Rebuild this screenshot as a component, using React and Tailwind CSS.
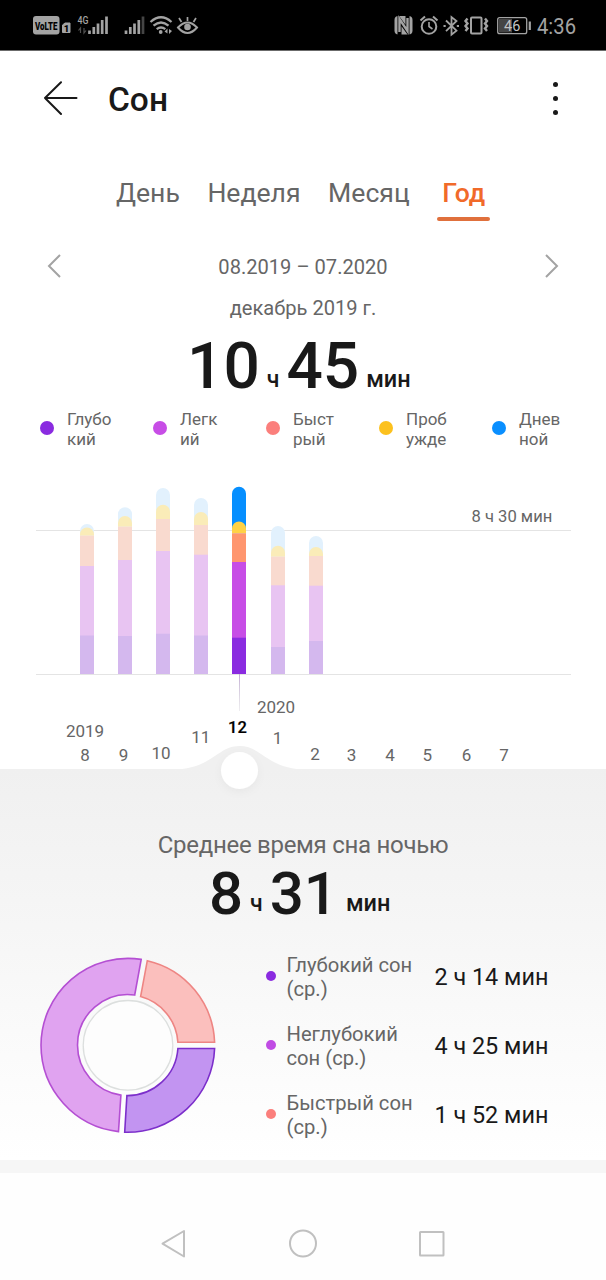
import React from "react";

const tabs = ["День", "Неделя", "Месяц"];

const legend = [
  { a: "Глубо", b: "кий", dot: "bg-[#8a2be0]" },
  { a: "Легк", b: "ий", dot: "bg-[#c74de6]" },
  { a: "Быст", b: "рый", dot: "bg-[#fb7f7c]" },
  { a: "Проб", b: "ужде", dot: "bg-[#fcc11e]" },
  { a: "Днев", b: "ной", dot: "bg-[#0a8fff]" },
];

// x, then the top edge of each layer: day, awake, REM, light, deep
const bars = [
  [80, 524, 527.5, 535.7, 566, 635.5],
  [118, 507.3, 516, 526.7, 560, 636],
  [156, 488, 504.7, 519, 551, 633.7],
  [194, 498, 512, 525, 554.7, 635.5],
  [232, 486.7, 521.5, 533.3, 562, 637.7],
  [271, 526, 545.7, 556.7, 585.3, 647],
  [309, 536, 547, 556, 585.7, 641],
];
const faded = ["#e2f1fd", "#faecb8", "#f9dacf", "#e8c4f2", "#d4b8ee"];
const strong = ["#068fff", "#ffd246", "#ff966e", "#c74de6", "#8a2be0"];

const axis = [
  ["2019", 85, 736.7], ["8", 85, 761], ["9", 123.5, 761], ["10", 161, 759],
  ["11", 200.8, 743], ["2020", 276, 712.5], ["1", 277.5, 744], ["2", 315, 760],
  ["3", 351.5, 761], ["4", 390, 761], ["5", 427.3, 761], ["6", 466.5, 761], ["7", 504, 761],
];

const phases = [
  { a: "Глубокий сон", b: "(ср.)", v: "2 ч 14 мин", dot: "bg-[#8a2be0]" },
  { a: "Неглубокий", b: "сон (ср.)", v: "4 ч 25 мин", dot: "bg-[#c04ce4]" },
  { a: "Быстрый сон", b: "(ср.)", v: "1 ч 52 мин", dot: "bg-[#fb7f7c]" },
];

function Bar({ bar, active }) {
  const [x, ...tops] = bar;
  const colors = active ? strong : faded;
  return tops.map((y, i) =>
    i < 2 ? (
      <path key={i} fill={colors[i]}
        d={`M${x} ${tops[2]}V${y + 7}a7 7 0 0 1 14 0V${tops[2]}z`} />
    ) : (
      <rect key={i} x={x} y={y} width="14" height={674 - y} fill={colors[i]} />
    )
  );
}

function StatusLeft() {
  return (
    <svg width="303" height="50" viewBox="0 0 303 50" fill="none">
      <rect x="33" y="16" width="26.500" height="18.500" rx="3" fill="#a3a3a3" />
      <text x="35" y="29.500" fontSize="11" fontWeight="900" fill="#000" textLength="22.500" lengthAdjust="spacingAndGlyphs">VoLTE</text>
      <path d="M65 23h5v9.500h-7.500V25z" fill="#a3a3a3" stroke="#a3a3a3" strokeLinejoin="round" />
      <text x="63.800" y="31.500" fontSize="9.500" fontWeight="900" fill="#000">1</text>
      <text x="77.500" y="24" fontSize="11" fontWeight="500" fill="#a3a3a3" textLength="11" lengthAdjust="spacingAndGlyphs">4G</text>
      <g stroke="#505050" strokeWidth="1.200">
        <path d="M80.500 33v-5l-2 2.500M84 28v5l2-2.500" />
      </g>
      <g stroke="#a3a3a3" strokeWidth="2.700">
        <path d="M89.500 30.500v3.500M93.800 27v7M98 23.500V34M102.200 20v14M106.500 16.500V34" />
        <path d="M126 30.500v3.500M130.300 27v7M134.500 23.500V34M138.800 20v14" />
        <path d="M143 16.500V34" stroke="#454545" />
      </g>
      <g stroke="#a3a3a3" strokeWidth="2.300">
        <path d="M150.500 22q10.500-9.500 21 0M153.500 25.700q7.500-6.500 15 0M156.700 29.200q4.300-3.500 8.600 0" />
      </g>
      <circle cx="160.700" cy="32" r="1.900" fill="#a3a3a3" />
      <path d="M164.500 31.500l3-3v5M169 29v5l3-3z" fill="#a3a3a3" />
      <path d="M178 27.500q9.500-10 19 0q-9.500 11-19 0z" stroke="#a3a3a3" strokeWidth="2" />
      <circle cx="187.500" cy="27" r="3.300" fill="#a3a3a3" />
      <path d="M187.500 21v-4M181.500 22l-2.500-4M193.500 22l2.500-4" stroke="#a3a3a3" strokeWidth="1.700" />
    </svg>
  );
}

function StatusRight() {
  return (
    <svg width="303" height="50" viewBox="303 0 303 50" fill="none" stroke="#a3a3a3">
      <rect x="394.500" y="16" width="18" height="18.500" rx="4" fill="#a3a3a3" stroke="none" />
      <path d="M399.500 35V20l8 11V15.500" stroke="#000" strokeWidth="4" />
      <path d="M399.500 32V19l8 12V18" strokeWidth="2.400" />
      <circle cx="429" cy="26.500" r="7.300" strokeWidth="2" />
      <path d="M429 22v4.500l3.500 2.500" strokeWidth="1.600" />
      <path d="M420.500 20.500l4.500-4M437.500 20.500l-4.500-4" strokeWidth="2" />
      <path d="M446 20.500l10.500 10.200-5 4V17l5 4L446 31.200" strokeWidth="1.800" />
      <path d="M443.500 26h2.200M456.800 26h2.200" strokeWidth="2" />
      <rect x="471" y="17.500" width="10.500" height="16" rx="1" strokeWidth="2" />
      <path d="M467.500 18.500l-2 2.500 2 2.500-2 2.500 2 2.500-2 2.500M485 18.500l2 2.500-2 2.500 2 2.500-2 2.500 2 2.500" strokeWidth="2.400" />
      <rect x="497.700" y="17.700" width="29" height="16" rx="2" strokeWidth="1.300" />
      <rect x="499" y="19" width="13" height="13.500" fill="#454545" stroke="none" />
      <path d="M529.800 21.500v8.500" strokeWidth="2.200" />
      <g fill="#a3a3a3" stroke="none">
        <text x="504" y="31" fontSize="14.500" fill="#c4c4c4" textLength="16.300" lengthAdjust="spacingAndGlyphs">46</text>
        <text x="537" y="34" fontSize="22" textLength="39" lengthAdjust="spacingAndGlyphs">4:36</text>
      </g>
    </svg>
  );
}

function Duration({ h, m, className, size, unit, hGap, mGap }) {
  return (
    <div className={`flex items-baseline font-medium text-[#191919] ${className}`}>
      <span className={size}>{h}</span>
      <span className={`text-[23px] ${unit} ${hGap}`}>ч</span>
      <span className={size}>{m}</span>
      <span className={`text-[23.5px] ${unit} ${mGap}`}>мин</span>
    </div>
  );
}

export default function App() {
  return (
    <div className="flex h-[1280px] w-[606px] flex-col overflow-hidden bg-white font-['Roboto',sans-serif] text-[#666]">
      <div className="flex h-[51px] shrink-0 border-b border-[#6b6b6b] bg-black">
        <StatusLeft />
        <StatusRight />
      </div>

      <header className="flex h-[96px] shrink-0 items-center pl-[43px] pr-[47px]">
        <svg width="36" height="36" viewBox="0 0 36 36" fill="none" stroke="#191919" strokeWidth="2" strokeLinecap="round" strokeLinejoin="round">
          <path d="M33.500 17H2M18 1.300L2 17l16 16" />
        </svg>
        <h1 className="ml-[29px] flex-1 pt-[2px] text-[33.5px] font-medium leading-[40px] text-[#191919]">Сон</h1>
        <div className="-mt-[2px] flex w-[8px] flex-col items-center gap-[9px]">
          <span className="size-[5px] rounded-full bg-[#191919]" />
          <span className="size-[5px] rounded-full bg-[#191919]" />
          <span className="size-[5px] rounded-full bg-[#191919]" />
        </div>
      </header>

      <nav className="flex h-[74px] shrink-0 gap-[27.5px] pl-[116px] pt-[25px] text-[26.6px] leading-[41px]">
        {tabs.map((t) => <span key={t}>{t}</span>)}
        <span className="flex w-[53px] flex-col items-center font-medium text-[#f16a2a]">
          Год
          <i className="mt-[4px] h-[4px] w-full rounded-full bg-[#e0703c]" />
        </span>
      </nav>

      <div className="mt-[20px] flex h-[52px] shrink-0 items-center justify-between px-[47px] text-[20.1px]">
        <svg className="-mt-[2px]" width="14" height="24" viewBox="0 0 14 24" fill="none" stroke="#a3a3a3" strokeWidth="2"><path d="M13 1L2 12l11 11" /></svg>
        <span>08.2019 – 07.2020</span>
        <svg className="-mt-[2px]" width="14" height="24" viewBox="0 0 14 24" fill="none" stroke="#a3a3a3" strokeWidth="2"><path d="M1 1l11 11L1 23" /></svg>
      </div>
      <div className="h-[30px] shrink-0 text-center text-[20.1px] leading-[30px]">декабрь 2019 г.</div>

      <Duration h="10" m="45" size="text-[64px]" unit="-translate-y-px" hGap="ml-[7px] mr-[7px]" mGap="ml-[7px]"
        className="h-[87px] shrink-0 pl-[187px] leading-[87px]" />

      <div className="flex h-[39px] shrink-0 pl-[40px] text-[17px] leading-[19.5px]">
        {legend.map((l) => (
          <div key={l.a} className="flex w-[113px] shrink-0 items-center gap-[13px]">
            <i className={`-mt-[3px] size-[14px] rounded-full ${l.dot}`} />
            <div>
              <div>{l.a}</div>
              <div>{l.b}</div>
            </div>
          </div>
        ))}
      </div>

      <svg className="relative z-10 shrink-0 overflow-visible" width="606" height="320" viewBox="0 449 606 320" fontSize="17" fill="#666">
        <defs>
          <linearGradient id="stem" x1="0" y1="674" x2="0" y2="711" gradientUnits="userSpaceOnUse">
            <stop offset="0" stopColor="#c4aed6" />
            <stop offset="1" stopColor="#c8c4ce" stopOpacity="0.300" />
          </linearGradient>
          <filter id="soft" x="-50%" y="-50%" width="200%" height="200%">
            <feDropShadow dx="0" dy="3" stdDeviation="4" floodColor="#000" floodOpacity="0.040" />
          </filter>
        </defs>
        <path d="M36 530.500h535M36 674.500h535" stroke="#e4e4e4" />
        {bars.map((b, i) => <Bar key={b[0]} bar={b} active={i === 4} />)}
        <rect x="239" y="674" width="1" height="37" fill="url(#stem)" />
        <text x="471.500" y="521.500" fontSize="16.600">8 ч 30 мин</text>
        {axis.map(([t, x, y]) => <text key={t} x={x} y={y} textAnchor="middle">{t}</text>)}
        <text x="237.500" y="733" textAnchor="middle" fontSize="16.500" fontWeight="500" stroke="#000" strokeWidth="0.200" fill="#000">12</text>
        <path d="M172 769.500C212 769.500 217 746 239.500 746S267 769.500 307 769.500z" fill="#f0f0f0" />
        <circle cx="239.500" cy="770.500" r="18.500" fill="#fff" filter="url(#soft)" />
      </svg>

      <section className="flex h-[391px] shrink-0 flex-col bg-linear-to-b from-[#f0f0f0] to-white pt-[61px]">
        <h2 className="h-[30px] text-center text-[24px] leading-[30px] tracking-[-0.28px]">Среднее время сна ночью</h2>
        <Duration h="8" m="31" size="text-[60px]" unit="-translate-y-[3px]" hGap="ml-[7px] mr-[7px]" mGap="ml-[8px]"
          className="h-[67px] pl-[209px] leading-[67px]" />
        <div className="flex pl-[40px] pt-[27px]">
          <svg className="mt-[3px]" width="176" height="178" viewBox="40 957 176 178" strokeWidth="1.600">
            <path d="M147.300 960.700A87 87 0 0 1 214.600 1042.200H177.900A50.500 50.500 0 0 0 140.600 996.600z" fill="#fbbfbd" stroke="#ee8583" />
            <path d="M214.600 1048.500A87 87 0 0 1 124.700 1132.200L126.900 1095.600A50.500 50.500 0 0 0 177.900 1048.500z" fill="#c294f1" stroke="#7c2fcb" />
            <path d="M118.500 1131.600A87 87 0 0 1 41 1045.300A87 87 0 0 1 141.200 959.400L134.700 995A50.500 50.500 0 0 0 77.500 1045.300A50.500 50.500 0 0 0 120.900 1095.100z" fill="#e0a3f0" stroke="#b44fd3" />
            <circle cx="128" cy="1045.300" r="44.800" fill="#fdfdfd" stroke="#dcdfde" strokeWidth="1.300" />
          </svg>
          <div className="ml-[50px] flex flex-col gap-[22px]">
            {phases.map((p) => (
              <div key={p.a} className="flex h-[47px] items-center">
                <i className={`-mt-[3px] size-[10px] rounded-full ${p.dot}`} />
                <div className="ml-[10.5px] w-[148px] text-[20.2px] leading-[23.5px]">
                  <div>{p.a}</div>
                  <div>{p.b}</div>
                </div>
                <div className="-mt-px text-[23.4px] leading-[28px] text-[#191919]">{p.v}</div>
              </div>
            ))}
          </div>
        </div>
      </section>

      <div className="h-[13px] shrink-0 bg-[#f6f6f6]" />

      <footer className="flex flex-1 items-start bg-[#fefefe] pl-[160px] pt-[56px]">
        <svg width="286" height="30" viewBox="160 1229 286 30" fill="none" stroke="#c0c0c0" strokeWidth="2" strokeLinejoin="round">
          <path d="M184 1231v25.500L162.500 1243.700z" />
          <circle cx="303" cy="1243.500" r="13" />
          <rect x="420" y="1232" width="23.500" height="23.500" rx="0.500" />
        </svg>
      </footer>
    </div>
  );
}
